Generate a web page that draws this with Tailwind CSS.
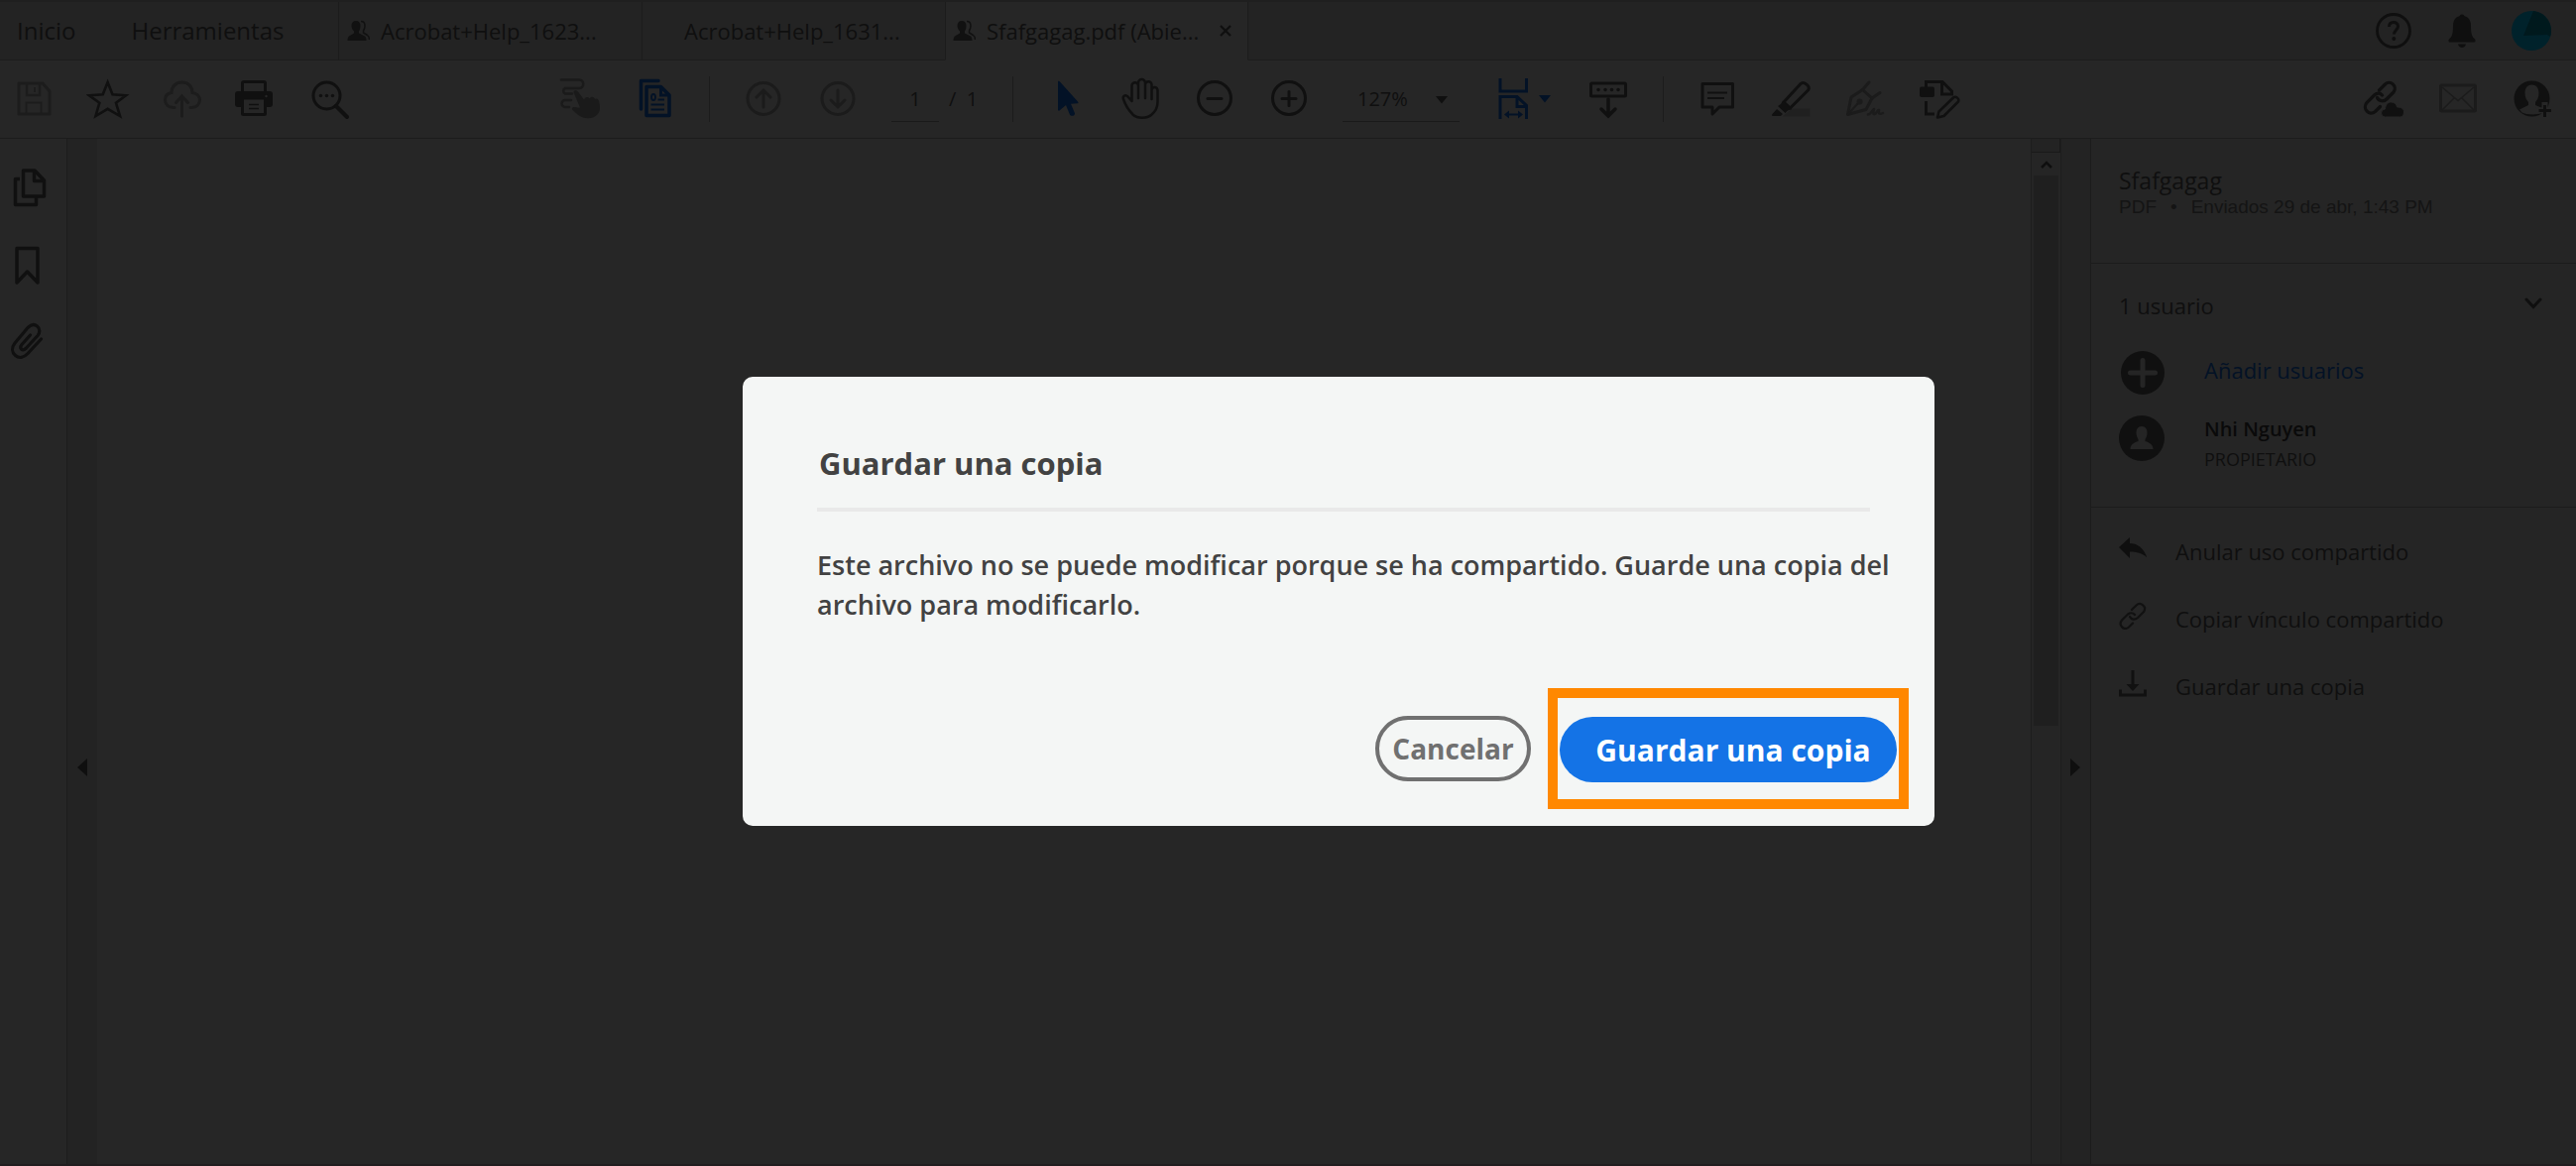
<!DOCTYPE html>
<html lang="es">
  <head>
    <meta charset="UTF-8" />
    <meta name="viewport" content="width=device-width, initial-scale=1.0" />
    <title>Sfafgagag.pdf</title>
    <script src="https://cdn.jsdelivr.net/npm/@tailwindcss/browser@4"></script>
  </head>
  <body
    class="flex min-h-screen flex-col border-b-2 border-[#211d1f] bg-[#262626] font-['Open_Sans',sans-serif] text-[#0f0f0f]"
  >
    <!-- Tabs -->
    <header class="flex h-[61px] border-t-2 border-[#1f1f1f] bg-[#232323]">
      <nav class="flex min-w-0 flex-1">
        <div
          class="flex w-[341px] shrink-0 items-center gap-14 border-b border-[#1c1c1c] pl-[17px] text-2xl"
        >
          <a href="#">Inicio</a>
          <a href="#">Herramientas</a>
        </div>
        <button
          class="flex w-[306px] shrink-0 items-center gap-[11px] border-b border-l border-[#1c1c1c] pl-2 text-[22px]"
        >
          <svg class="h-[22px] w-[23px]" viewBox="0 0 23 22" fill="none">
            <path
              d="M9 1c3 0 4.500 2 4.500 5 0 2-.5 4-1.500 5.500v2l6 3c1 1 1.500 2.500 1.500 4.500H.5c0-2 .5-3.500 1.500-4.500l5-3v-2C5.500 10 4.500 8 4.500 6c0-3 1.500-5 4.500-5z"
              fill="#111111"
            />
            <path
              d="M14 1.500c2.500 0 4 2 4 4.500 0 2-.5 3.500-1.500 5v2l4 2.500c1.500 1 2 2.500 2 4.500"
              stroke="#111111"
              stroke-width="1.500"
            />
          </svg>
          Acrobat+Help_1623...
        </button>
        <button
          class="flex w-[306px] shrink-0 items-center border-b border-l border-[#1c1c1c] pl-[42px] text-[22px]"
        >
          Acrobat+Help_1631...
        </button>
        <div
          class="flex w-[306px] shrink-0 items-center border-x border-b border-x-[#1c1c1c] border-b-[#262626] bg-[#262626] pl-[7px]"
        >
          <button class="flex items-center gap-[11px] text-[22px]">
            <svg class="h-[22px] w-[23px]" viewBox="0 0 23 22" fill="none">
              <path
                d="M9 1c3 0 4.500 2 4.500 5 0 2-.5 4-1.500 5.500v2l6 3c1 1 1.500 2.500 1.500 4.500H.5c0-2 .5-3.500 1.500-4.500l5-3v-2C5.500 10 4.500 8 4.500 6c0-3 1.500-5 4.500-5z"
                fill="#111111"
              />
              <path
                d="M14 1.500c2.500 0 4 2 4 4.500 0 2-.5 3.500-1.500 5v2l4 2.500c1.500 1 2 2.500 2 4.500"
                stroke="#111111"
                stroke-width="1.500"
              />
            </svg>
            Sfafgagag.pdf (Abie...
          </button>
          <button class="mr-4 ml-auto" aria-label="Cerrar">
            <svg class="h-3 w-3" viewBox="0 0 12 12">
              <path
                d="M1 1l10 10M11 1L1 11"
                stroke="#0f0f0f"
                stroke-width="2.200"
              />
            </svg>
          </button>
        </div>
        <div class="flex-1 border-b border-[#1c1c1c]"></div>
      </nav>
      <div class="flex items-center border-b border-[#1c1c1c] pr-[25px]">
        <button aria-label="Ayuda">
          <svg class="size-9" viewBox="0 0 36 36" fill="none" stroke="#0f0f0f">
            <circle cx="18" cy="18" r="16.500" stroke-width="2.800" />
            <path
              d="M13.500 14c0-3 2-4.500 4.500-4.500s4.500 1.500 4.500 4c0 3.500-4 4-4 8"
              stroke-width="3"
            />
            <circle cx="18.300" cy="26" r="1" stroke-width="2" />
          </svg>
        </button>
        <button class="ml-[37px]" aria-label="Notificaciones">
          <svg class="h-[34px] w-7" viewBox="0 0 28 34" fill="#0f0f0f">
            <circle cx="14" cy="3" r="2.500" />
            <path
              d="M14 2c6 0 9 4 9 10 0 8 1 11 4 13.500.8.8.8 3-.5 3h-25c-1.300 0-1.300-2.200-.5-3 3-2.500 4-5.500 4-13.500C5 6 8 2 14 2zM10 30.500h8c-.5 2-2 3.500-4 3.500s-3.500-1.500-4-3.500z"
            />
          </svg>
        </button>
        <button class="ml-9" aria-label="Cuenta">
          <svg class="size-10" viewBox="0 0 40 40">
            <circle cx="20" cy="20" r="20" fill="#00222b" />
            <path d="M22 0a20 20 0 0 1 17 26l-3-2-24 1z" fill="#00191d" />
          </svg>
        </button>
      </div>
    </header>

    <!-- Toolbar -->
    <div
      class="flex h-[79px] items-center border-b border-[#1c1c1c] pr-[22px] pl-3"
    >
      <div class="flex gap-[31px]">
        <button aria-label="Guardar" disabled>
          <svg class="size-11" viewBox="0 0 44 44" fill="none" stroke="#1c1c1c">
            <path d="M7 6h24l7 8v23H7z" stroke-width="3" stroke-linejoin="round" />
            <path d="M15 6v12h13V6" stroke-width="2.500" />
            <path d="M23 10v5M14.500 37V25.500h15V37" stroke-width="2" />
          </svg>
        </button>
        <button aria-label="Destacar">
          <svg class="size-11" viewBox="0 0 44 44" fill="none">
            <path
              d="M21.600 5L26.500 17.200 40 18.300 30 25.800 34 39 21.600 31.800 9.500 39 13.300 25.800 3 18.300 16.700 17.200z"
              stroke="#101010"
              stroke-width="2.600"
            />
          </svg>
        </button>
        <button aria-label="Subir" disabled>
          <svg
            class="size-11"
            viewBox="0 0 44 44"
            fill="none"
            stroke="#1c1c1c"
            stroke-width="3"
            stroke-linecap="round"
          >
            <path
              d="M14 30.500h-1.500c-5 0-8-3.500-8-7.500 0-4.500 3-7 6.500-7.500C11 9 15.500 5 21.500 5S32 9 32 15.500c4 .5 7.500 3 7.500 7.500 0 4-3 7.500-8 7.500H30"
            />
            <path d="M21.500 39V19M15.500 25.500l6-6.500 6 6.500" />
          </svg>
        </button>
        <button aria-label="Imprimir">
          <svg class="size-11" viewBox="0 0 44 44" fill="none">
            <path
              d="M7.500 15V6a1.500 1.500 0 0 1 1.500-1.500h20A1.500 1.500 0 0 1 30.500 6v9"
              stroke="#101010"
              stroke-width="3"
            />
            <path
              d="M3 14h32a3 3 0 0 1 3 3v10a3 3 0 0 1-3 3h-4V21H8v9H3a3 3 0 0 1-3-3V17a3 3 0 0 1 3-3z"
              fill="#101010"
            />
            <path
              d="M7.500 21h23v15.500a1 1 0 0 1-1 1h-21a1 1 0 0 1-1-1z"
              stroke="#101010"
              stroke-width="3"
            />
            <path
              d="M14 27.500h10M14 31.500h10"
              stroke="#101010"
              stroke-width="1.500"
            />
            <circle cx="31.500" cy="19" r="1.200" fill="#262626" />
          </svg>
        </button>
        <button aria-label="Buscar">
          <svg class="size-11" viewBox="0 0 44 44" fill="none">
            <circle
              cx="17.500"
              cy="18.500"
              r="13.500"
              stroke="#101010"
              stroke-width="3"
            />
            <path
              d="M27 29l11 11"
              stroke="#101010"
              stroke-width="4"
              stroke-linecap="round"
            />
            <g fill="#101010">
              <circle cx="11.500" cy="18.500" r="1.700" />
              <circle cx="17.500" cy="18.500" r="1.700" />
              <circle cx="23.500" cy="18.500" r="1.700" />
            </g>
          </svg>
        </button>
      </div>

      <div class="ml-[207px] flex items-center">
        <div class="flex gap-[31px]">
          <button aria-label="Desplazamiento" disabled>
            <svg class="size-11" viewBox="0 0 44 44" fill="none">
              <path
                d="M3 2.500h18a4 4 0 0 1 0 8.500H7a3 3 0 0 0 0 5.500h7M13 23H7a3.500 3.500 0 0 0 0 7h4"
                stroke="#1a1a1a"
                stroke-width="2.500"
                stroke-linecap="round"
              />
              <path
                d="M15.500 15c0-2 3-2.500 4.500-.5l6 8c1.500-3 4-3 5.500-1 1.500-2.500 4.500-2 5.500.5 2-1 3.500 0 4 2 1.500 6 1.500 10-1 13-3 4-10 5-15 3.500-4-1.500-7-4.500-10-7-2-1.500-1-3.500 1-3.500 2.500 0 4 1 6 .5z"
                fill="#1a1a1a"
              />
            </svg>
          </button>
          <button aria-label="Miniaturas">
            <svg class="size-11" viewBox="0 0 44 44" fill="none" stroke="#031226">
              <path
                d="M8.500 32V3.500H26"
                stroke-width="3.500"
                stroke-linecap="round"
                stroke-linejoin="round"
              />
              <path
                d="M14 9.500h14.500L37 18v20.500H14z"
                stroke-width="3.500"
                stroke-linejoin="round"
              />
              <path d="M28.500 9.500V18H37" stroke-width="3" />
              <ellipse cx="21" cy="20" rx="2" ry="3" stroke-width="1.800" />
              <path
                d="M25.500 22.500H32M18.500 27.500H32M18.500 32.500H32"
                stroke-width="1.800"
              />
            </svg>
          </button>
        </div>
        <div class="mx-[33px] h-[46px] w-px bg-[#1c1c1c]"></div>
        <div class="flex gap-[31px]">
          <button aria-label="Página anterior" disabled>
            <svg
              class="size-11"
              viewBox="0 0 44 44"
              fill="none"
              stroke="#1b1b1b"
              stroke-width="3"
              stroke-linecap="round"
            >
              <circle cx="21" cy="21.500" r="16" />
              <path d="M21 30V14M14 20l7-7 7 7" />
            </svg>
          </button>
          <button aria-label="Página siguiente" disabled>
            <svg
              class="size-11"
              viewBox="0 0 44 44"
              fill="none"
              stroke="#1b1b1b"
              stroke-width="3"
              stroke-linecap="round"
            >
              <circle cx="21" cy="21.500" r="16" />
              <path d="M21 13v16M14 23l7 7 7-7" />
            </svg>
          </button>
        </div>
        <input
          class="ml-[31px] h-[46px] w-12 border-b border-[#1a1a1a] text-center text-xl"
          type="text"
          value="1"
          aria-label="Número de página"
        />
        <span class="ml-2.5 w-7 text-xl whitespace-nowrap">/&nbsp; 1</span>
        <div class="mr-[33px] ml-9 h-[46px] w-px bg-[#1c1c1c]"></div>
        <div class="flex gap-[31px]">
          <button aria-label="Seleccionar">
            <svg class="size-11" viewBox="0 0 44 44">
              <path
                d="M12 5c0-1.500 1-1.500 2-.5l18 20c1 1 .5 1.800-.5 1.800l-6.500.5 4 9.500c.5 2.500-4 3.500-5 1.500L20 28l-6.500 5.500c-1 .5-1.500 0-1.500-1z"
                fill="#031226"
              />
            </svg>
          </button>
          <button aria-label="Mano">
            <svg class="size-11" viewBox="0 0 44 44" fill="none">
              <path
                d="M11.500 24L7.500 19.500C5 17 2 19 3 22c2 6 6 12 10 16 4 3.500 14 3.500 18 0 5-4 6.500-8 6.500-13V13a3 3 0 0 0-6 0v9M31.500 13V7.500a3 3 0 0 0-6.500 0V21M25 7V5.500a3.500 3.500 0 0 0-7 0V21M18 8.500a3 3 0 0 0-6.500 0V24"
                stroke="#101010"
                stroke-width="2.500"
                stroke-linecap="round"
                stroke-linejoin="round"
              />
            </svg>
          </button>
          <button aria-label="Reducir">
            <svg
              class="size-11"
              viewBox="0 0 44 44"
              fill="none"
              stroke="#101010"
              stroke-width="3"
              stroke-linecap="round"
            >
              <circle cx="20" cy="21" r="16.500" />
              <path d="M13 21.500h14" />
            </svg>
          </button>
          <button aria-label="Ampliar">
            <svg
              class="size-11"
              viewBox="0 0 44 44"
              fill="none"
              stroke="#101010"
              stroke-width="3"
              stroke-linecap="round"
            >
              <circle cx="20" cy="21" r="16.500" />
              <path d="M13 21.500h14M20 14.500v14" />
            </svg>
          </button>
        </div>
        <div class="relative ml-[30px]">
          <select
            class="h-[46px] w-[118px] appearance-none border-b border-[#1a1a1a] pl-[15px] text-xl"
            aria-label="Zoom"
          >
            <option>127%</option>
          </select>
          <svg
            class="pointer-events-none absolute top-5 right-3 h-2 w-3"
            viewBox="0 0 12 8"
          >
            <path d="M0 0h12L6 7.500z" fill="#0f0f0f" />
          </svg>
        </div>
        <button class="ml-8 flex items-center gap-1" aria-label="Ajustar">
          <svg class="size-11" viewBox="0 0 44 44" fill="none" stroke="#031226">
            <path
              d="M9 1v13h26.500V1M9 42V19.500h17l9.500 9V42M26 19.500v10h9.500"
              stroke-width="3"
            />
            <path d="M16 37.500h13" stroke-width="2" />
            <path
              d="M13 37.500l5-4v8zM32 37.500l-5-4v8z"
              fill="#031226"
              stroke="none"
            />
          </svg>
          <svg class="h-2 w-3" viewBox="0 0 12 8">
            <path d="M0 0h12L6 7.500z" fill="#031226" />
          </svg>
        </button>
        <button class="ml-9" aria-label="Barra de herramientas">
          <svg
            class="size-11"
            viewBox="0 0 44 44"
            fill="none"
            stroke="#101010"
            stroke-width="3"
          >
            <rect x="4.500" y="6" width="35" height="13" rx="1" />
            <path
              d="M22 22v15M15 32l7 7 7-7"
              stroke-width="3.500"
              stroke-linecap="round"
            />
            <g fill="#101010" stroke="none">
              <circle cx="12" cy="12.500" r="1.800" />
              <circle cx="19" cy="12.500" r="1.800" />
              <circle cx="25.500" cy="12.500" r="1.800" />
              <circle cx="32" cy="12.500" r="1.800" />
            </g>
          </svg>
        </button>
        <div class="mx-[33px] h-[46px] w-px bg-[#1c1c1c]"></div>
        <div class="flex gap-[31px]">
          <button aria-label="Comentario">
            <svg class="size-11" viewBox="0 0 44 44" fill="none" stroke="#101010">
              <path
                d="M6 6.500h30.500V30H23l-7 7v-7H6z"
                stroke-width="3"
                stroke-linejoin="round"
              />
              <path d="M11 15.500h20M11 21h17" stroke-width="1.800" />
            </svg>
          </button>
          <button aria-label="Resaltar">
            <svg class="size-11" viewBox="0 0 44 44" fill="none">
              <path d="M21 31.500h18.500v8H12z" fill="#202020" />
              <path
                d="M13 25L30 6.500c3-3 10.500 2.500 7.500 6.500L19.500 31z"
                stroke="#101010"
                stroke-width="3"
                stroke-linejoin="round"
              />
              <path
                d="M12 23.500l9 8.500-4 1.500-2.500 2.500-7.500-7 3-2zM6 32l6 5-2 2H2c-1.500 0-1-1.500-.5-2z"
                fill="#101010"
              />
            </svg>
          </button>
          <button aria-label="Firmar" disabled>
            <svg
              class="size-11"
              viewBox="0 0 44 44"
              fill="none"
              stroke="#1b1b1b"
              stroke-width="3"
              stroke-linecap="round"
              stroke-linejoin="round"
            >
              <path d="M2.500 37.500L6 20l11.500-7.500 9.500 8.500-6 11.500z" />
              <path d="M3 37l10-11" stroke-width="2" />
              <circle cx="14.500" cy="24.500" r="1.500" />
              <path d="M17.500 12.500L24 5M27 21l8-5.500" />
              <path
                d="M23 37.500c3 0 4-4.500 6-5.500-1 3-1 6 1 5s2-4 4-4c-1 3 0 5 4 3"
                stroke-width="2.500"
              />
            </svg>
          </button>
          <button aria-label="Editar documento">
            <svg class="size-11" viewBox="0 0 44 44" fill="none" stroke="#101010">
              <path
                d="M6.500 10V4.500H23l9.500 9.500v3H22.500V4.500M6.500 24v13H15"
                stroke-width="3"
              />
              <rect
                x="0"
                y="9.500"
                width="15"
                height="10.500"
                rx="2"
                fill="#101010"
                stroke="none"
              />
              <path
                d="M18 40.500l1.500-6L34 20.500c2.500-2 6.500 1 5 4L24.500 39z"
                stroke-width="2.500"
                stroke-linejoin="round"
              />
            </svg>
          </button>
        </div>
      </div>

      <div class="ml-auto flex gap-[31px]">
        <button aria-label="Compartir vínculo">
          <svg class="size-11" viewBox="0 0 44 44" fill="none">
            <g stroke="#101010" stroke-width="3.200" stroke-linecap="round">
              <path
                d="M17.500 13l6-6c5-5 13 2 8.500 8l-7 7c-3 3-8 2-9.500-1.500"
              />
              <path
                d="M20.500 18c-2.500-3-6-2-8 0l-7.500 7.500c-5 6 2.500 14 8.500 9l5-5"
              />
            </g>
            <path
              d="M23.500 40a4 4 0 0 1 0-8c.5-5 3-7 6-7 3.500 0 5.500 2 6 5 4 0 7 1.500 7 5 0 3-1.500 5-4 5z"
              fill="#101010"
              stroke="#262626"
              stroke-width="1"
            />
          </svg>
        </button>
        <button aria-label="Correo" disabled>
          <svg class="size-11" viewBox="0 0 44 44" fill="none" stroke="#1b1b1b">
            <rect x="4.500" y="8" width="35" height="26" rx="1" stroke-width="3" />
            <path
              d="M6 10l16 13.500L38 10M6 33l12-12M38 33L26 21"
              stroke-width="1.500"
            />
          </svg>
        </button>
        <button aria-label="Añadir persona">
          <svg class="size-11" viewBox="0 0 44 44">
            <circle cx="21.500" cy="21.500" r="18" fill="#101010" />
            <path
              d="M21.500 7.500c5 0 7 4 7 8.500 0 4-1.500 7-3.500 9v3l7 3v4.500c-4 2.500-16 2.500-20.500 0L9 32.500l9-4.500v-3c-2-2-3.500-5-3.500-9 0-4.500 2-8.500 7-8.500z"
              fill="#262626"
            />
            <path
              d="M34.500 28v12M28.500 33.500h12.500"
              stroke="#262626"
              stroke-width="6"
              stroke-linecap="square"
            />
            <path
              d="M34.500 28v12M28.500 33.500h12.500"
              stroke="#101010"
              stroke-width="3"
            />
          </svg>
        </button>
      </div>
    </div>

    <main class="flex flex-1">
      <!-- Navigation pane -->
      <aside
        class="flex w-[68px] flex-col gap-[34px] border-r border-[#1c1c1c] pt-[27px] pl-1.5"
      >
        <button class="w-11" aria-label="Miniaturas de página">
          <svg
            class="size-11"
            viewBox="0 0 44 44"
            fill="none"
            stroke="#101010"
            stroke-width="3.500"
            stroke-linejoin="round"
          >
            <path d="M17.500 5H29l9.500 10v16h-21z" />
            <path d="M28.500 5v10.500h10M14 13.500H9.500V39.500h21V32" />
          </svg>
        </button>
        <button class="w-11" aria-label="Marcadores">
          <svg class="size-11" viewBox="0 0 44 44" fill="none">
            <path
              d="M11 5.500h21V40l-10.500-11L11 40z"
              stroke="#101010"
              stroke-width="3.500"
              stroke-linejoin="round"
            />
          </svg>
        </button>
        <button class="w-11" aria-label="Archivos adjuntos">
          <svg class="size-11" viewBox="0 0 44 44" fill="none">
            <path
              d="M35.500 19L22 33.500c-4 4.500-9 5-12.500 2s-4-8-.5-12.500L22 7.500c3-3 6.500-4 9.500-1.500s3 6.500.5 9.500L20.500 28c-4 4-7.500.5-4.500-3.500l8.500-9.500"
              stroke="#101010"
              stroke-width="3.200"
              stroke-linecap="round"
            />
          </svg>
        </button>
      </aside>
      <div class="w-[30px] bg-[#232323] pt-[625px] pl-2.5">
        <button class="block" aria-label="Ocultar panel izquierdo">
          <svg class="h-[18px] w-2.5" viewBox="0 0 10 18">
            <path d="M10 0v18L0 9z" fill="#0f0f0f" />
          </svg>
        </button>
      </div>

      <!-- Document -->
      <section class="flex-1"></section>

      <!-- Scrollbar -->
      <div class="flex w-[31px] flex-col border-x border-[#1d1d1d] bg-[#252525]">
        <div class="h-3.5 border-r border-b border-[#191919] bg-[#232323]"></div>
        <button
          class="flex h-[23px] items-center justify-center"
          aria-label="Desplazar hacia arriba"
        >
          <svg class="h-2 w-3" viewBox="0 0 12 8" fill="none">
            <path d="M1 7l5-5 5 5" stroke="#0f0f0f" stroke-width="2.500" />
          </svg>
        </button>
        <div class="mx-0.5 h-[555px] bg-[#1f1f1f]"></div>
      </div>
      <div class="w-[29px] bg-[#232323] pt-[625px] pl-[9px]">
        <button class="block" aria-label="Ocultar panel derecho">
          <svg class="h-[18px] w-2.5" viewBox="0 0 10 18">
            <path d="M0 0v18l10-9z" fill="#0f0f0f" />
          </svg>
        </button>
      </div>

      <!-- Share panel -->
      <aside class="w-[490px] border-l border-[#1c1c1c] bg-[#252525]">
        <div class="border-b border-[#1c1c1c] pt-[29px] pb-[42px] pl-7">
          <h2 class="text-[23px] leading-[26px]">Sfafgagag</h2>
          <p
            class="flex font-['Liberation_Sans',sans-serif] text-[19px] leading-7 text-[#141414]"
          >
            <span>PDF</span>
            <span class="mx-3.5">•</span>
            <span>Enviados 29 de abr, 1:43 PM</span>
          </p>
        </div>
        <div class="border-b border-[#1c1c1c] pt-[26px] pb-[33px] pl-7">
          <button
            class="flex w-full items-center justify-between pr-[34px] text-[22px] leading-8"
          >
            1 usuario
            <svg class="mb-1 h-3 w-[18px]" viewBox="0 0 18 12" fill="none">
              <path
                d="M2 2l7 7.500L16 2"
                stroke="#0f0f0f"
                stroke-width="3"
                stroke-linecap="round"
              />
            </svg>
          </button>
          <a
            href="#"
            class="mt-[29px] flex gap-10 text-[22px] leading-10 text-[#031226]"
          >
            <svg class="size-[46px]" viewBox="0 0 46 46">
              <circle cx="24" cy="23" r="22" fill="#101010" />
              <path
                d="M24 10.500v25M11.500 23h25"
                stroke="#252525"
                stroke-width="5"
                stroke-linecap="round"
              />
            </svg>
            Añadir usuarios
          </a>
          <div class="mt-[19px] flex gap-10">
            <svg class="h-12 w-[46px]" viewBox="0 0 46 48">
              <circle cx="23" cy="24" r="23" fill="#101010" />
              <path
                d="M23 12c4 0 5.500 3 5.500 6.500 0 3-1 5-2 6.500v2c5 1.500 8 4 8 8h-23c0-4 3-6.500 8-8v-2c-1-1.500-2-3.500-2-6.500 0-3.500 1.500-6.500 5.500-6.500z"
                fill="#252525"
              />
            </svg>
            <div>
              <p class="text-xl leading-[30px] font-semibold text-[#0a0a0a]">
                Nhi Nguyen
              </p>
              <p class="text-lg leading-[30px]">PROPIETARIO</p>
            </div>
          </div>
        </div>
        <ul class="pt-2.5 pl-7 text-[22px] leading-[68px]">
          <li>
            <button class="flex items-center gap-[29px]">
              <svg class="mb-1.5 size-7" viewBox="0 0 28 28">
                <path
                  d="M0 13L11 3v6c8 0 14 5 17.500 14.500C24 19 18 17.500 11 17.500V24z"
                  fill="#0f0f0f"
                />
              </svg>
              Anular uso compartido
            </button>
          </li>
          <li>
            <button class="flex items-center gap-[29px]">
              <svg class="mb-1.5 size-7" viewBox="0 0 28 28" fill="none">
                <g stroke="#111111" stroke-width="2.200" stroke-linecap="round">
                  <path
                    d="M13 8l4.500-4.500c4.500-4 11 1.500 7.500 6.500l-6 6c-3 2.500-6.500 2-8-1"
                  />
                  <path
                    d="M16 13c-2-2.500-5-2-7-.5L3 18.500c-4 5 2 11 7 7l4-4"
                  />
                </g>
              </svg>
              Copiar vínculo compartido
            </button>
          </li>
          <li>
            <button class="flex items-center gap-[29px]">
              <svg class="mb-1.5 size-7" viewBox="0 0 28 28" fill="none">
                <path
                  d="M1.500 20.500V26h25v-5.500M14 1v15"
                  stroke="#111111"
                  stroke-width="3"
                />
                <path d="M7.500 15h13L14 22z" fill="#111111" />
              </svg>
              Guardar una copia
            </button>
          </li>
        </ul>
      </aside>
    </main>

    <!-- Dialog -->
    <div
      class="fixed inset-0 flex items-center justify-center pt-[37px] pl-[102px]"
    >
      <div
        class="w-[1202px] rounded-[10px] bg-[#f4f6f5] pt-[67px] pb-[17px] pl-[75px] text-[#424242]"
        role="dialog"
        aria-modal="true"
        aria-labelledby="dialog-title"
      >
        <h1 id="dialog-title" class="pl-0.5 text-[31px] leading-10 font-bold">
          Guardar una copia
        </h1>
        <hr class="mt-[25px] mr-[65px] border-t-4 border-[#e9e9e9]" />
        <p class="mt-[34px] mr-10 text-[27px] leading-10 font-semibold">
          Este archivo no se puede modificar porque se ha compartido. Guarde una
          copia del archivo para modificarlo.
        </p>
        <div class="mt-16 mr-[26px] flex items-center justify-end gap-[17px]">
          <button
            class="h-[66px] w-[157px] rounded-full border-4 border-[#707070] text-[28px] font-bold text-[#707070]"
          >
            Cancelar
          </button>
          <div class="border-10 border-[#ff8800] px-0.5 pt-[19px] pb-[17px]">
            <button
              class="block h-[66px] w-[340px] rounded-full bg-[#1473e6] pl-2.5 text-[30px] font-bold text-white"
            >
              Guardar una copia
            </button>
          </div>
        </div>
      </div>
    </div>
  </body>
</html>
